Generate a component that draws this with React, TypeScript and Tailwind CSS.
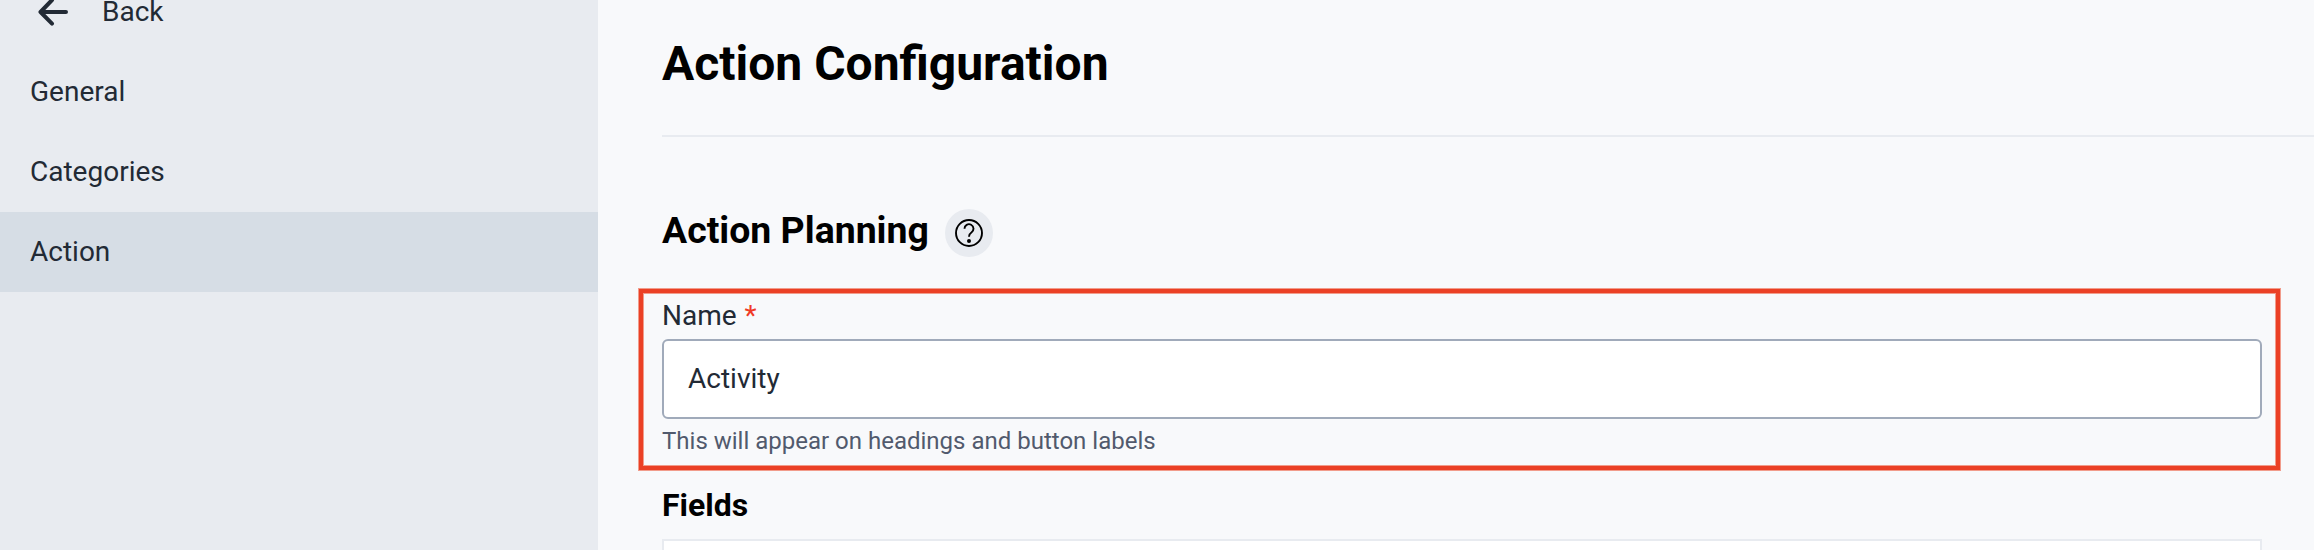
import React from "react";

const navItems = [
  { label: "General", active: false },
  { label: "Categories", active: false },
  { label: "Action", active: true },
];

function ArrowLeftIcon() {
  return (
    <svg width="40" height="40" viewBox="0 0 40 40" fill="none" stroke="#222a35" strokeWidth="4" strokeLinecap="round" strokeLinejoin="round" className="shrink-0">
      <path d="M34 20H8.5M20 8 8.5 20 20 31.6" />
    </svg>
  );
}

function HelpIcon() {
  return (
    <svg width="28" height="28" viewBox="0 0 28 28" fill="none" stroke="#000" strokeWidth="1.9">
      <circle cx="14" cy="14" r="13" />
      <path d="M9.5 9.8a4.5 4.5 0 1 1 6.9 3.7c-1.4.9-2.4 1.8-2.4 4.3" />
      <circle cx="14" cy="22" r="2" fill="#000" stroke="none" />
    </svg>
  );
}

function Sidebar() {
  return (
    <nav className="w-[598px] shrink-0 bg-[#e8ebf0]">
      <a className="-mt-7 flex h-20 items-center gap-[30px] pl-8">
        <ArrowLeftIcon />
        <span>Back</span>
      </a>
      {navItems.map((item) => (
        <a key={item.label} className={item.active ? "flex h-20 items-center bg-[#d6dde5] pl-[30px]" : "flex h-20 items-center pl-[30px]"}>
          {item.label}
        </a>
      ))}
    </nav>
  );
}

export default function App() {
  return (
    <div className="flex h-[550px] w-[2314px] overflow-hidden bg-[#f8f9fb] font-['Roboto',sans-serif] text-[28px] leading-10 text-[#222a35]">
      <Sidebar />
      <main className="flex min-w-0 grow flex-col">
        <header className="ml-16 flex h-[137px] shrink-0 items-center border-b-2 border-[#e8ebf0] pb-2">
          <h1 className="text-[48px] leading-[56px] font-bold text-black">Action Configuration</h1>
        </header>
        <div className="ml-16 mt-[72px] flex h-12 shrink-0 items-center gap-4">
          <h2 className="-mt-1.5 w-[267px] text-[37.44px] leading-[44px] font-bold whitespace-nowrap text-black">Action Planning</h2>
          <button className="flex size-12 items-center justify-center rounded-full bg-[#e8ebf0]">
            <HelpIcon />
          </button>
        </div>
        <section className="mt-[31px] ml-10 h-[183px] w-[1643px] shrink-0 border border-[#f19c8b]">
          <div className="h-full border-4 border-[#eb4025]">
            <div className="h-full border border-[#f19c8b] pl-[18px]">
              <label className="flex h-[45px] items-center gap-2 pb-[1px]">
                Name <span className="text-[#f03a26]">*</span>
              </label>
              <div className="flex h-20 w-[1600px] items-center rounded-md border-2 border-[#a0aaba] bg-white pl-6">
                Activity
              </div>
              <p className="mt-1 text-[24px] leading-9 text-[#515a6d]">This will appear on headings and button labels</p>
            </div>
          </div>
        </section>
        <h3 className="mt-[14px] ml-16 h-[54px] shrink-0 text-[32px] leading-10 font-bold text-black">Fields</h3>
        <div className="ml-16 h-20 w-[1600px] shrink-0 border-2 border-[#e8ebf0] bg-white" />
      </main>
    </div>
  );
}
